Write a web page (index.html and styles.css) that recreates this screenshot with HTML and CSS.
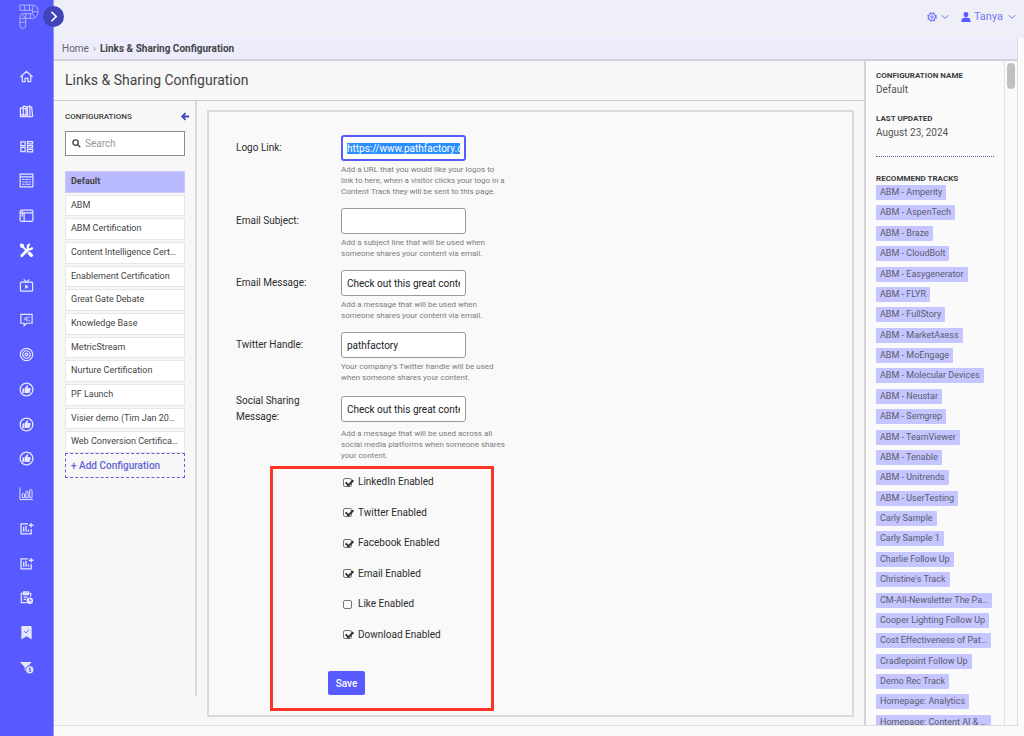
FILE: index.html
```html
<!DOCTYPE html>
<html lang="en">
<head>
<meta charset="utf-8">
<title>Links &amp; Sharing Configuration</title>
<link rel="stylesheet" href="styles.css">
</head>
<body>
<svg class="sprite" aria-hidden="true">
  <symbol id="thumb" viewBox="0 0 16 16"><circle cx="8" cy="8" r="6.800" fill="none" stroke="currentColor" stroke-width="1.400"/><path fill="currentColor" stroke="none" d="M3.600 6.800h1.800v4.800H3.600zM5.900 6.900 8.600 3.500c1-.3 1.300.5 1 1.400l-.5 1.600h2.400c.9 0 1.100.8.900 1.400l-.9 2.900c-.2.700-.6.900-1.200.9H5.900z"/></symbol>
  <symbol id="chartplus" viewBox="0 0 16 16"><path fill="none" stroke="currentColor" stroke-width="1.4" d="M9.500 3H2.200v10.800H13V8.500M5 6v5.500M7.500 5v6.500M10 9v2.500M13 2v5M10.500 4.500h5"/></symbol>
</svg>
<div class="shell">
  <nav class="sidebar" aria-label="Main">
    <a class="logo" href="#" aria-label="Home page">
      <svg viewBox="0 0 22 26"><path d="M1 1h13c4 0 6 3 6 7s-3 7-6 7H7v7.500a3 3 0 0 1-6 0V14c0-3 2-4 4-4h8c2 0 2-3.500 0-3.500H1zM6 1v5.500M11 1v5.500M15 1.200 14 7M20 8h-6M17 14l-3-4M12 10v5M7 10v5M1 15h6M1 19h6M3 10.500l4 4.500"/></svg>
    </a>
    <button class="expand" aria-label="Expand menu"><svg viewBox="0 0 20 20"><path d="m8 5.500 4.500 4.500L8 14.500"/></svg></button>
    <div class="nav-items">
      <a href="#" aria-label="Home"><svg viewBox="0 0 16 16"><path d="M1.500 8.500 8 2.500l6.500 6M3.500 7.500v6h3v-3.500h3v3.500h3v-6"/></svg></a>
      <a href="#" aria-label="Library"><svg viewBox="0 0 16 16"><path d="M1.500 4.500h3v9h-3zM4.500 2.500h3v11h-3zM9 3l2.500-.7v11.200H9zM12 3.500l1.500-.3 1 10-2.500.3M1.500 11.500h6M5 5h2"/></svg></a>
      <a href="#" aria-label="Tracks"><svg viewBox="0 0 16 16"><path d="M2 3h4.500v4H2zM2 9h4.500v4.500H2zM9 2.800h5.500v2.500H9zM9 7h5.500v2.500H9zM9 11.200h5.500v2.500H9z"/></svg></a>
      <a href="#" aria-label="Forms"><svg viewBox="0 0 16 16"><path d="M1.200 1.200h13.600v13.600H1.200zM1.200 4.200h13.600"/><path stroke-width="1.100" d="M3.500 7H6M7 7h3M11 7h1.500M3.500 9.500H5M6 9.500h3.500M10.500 9.500h2M3.500 12H6M7 12h5.500"/></svg></a>
      <a href="#" aria-label="Pages"><svg viewBox="0 0 16 16"><rect x="1.200" y="2.200" width="13.600" height="12" rx="1.500"/><path d="M1.200 5.200h13.600M5.500 5.200V14M3.500 2.500V9"/></svg></a>
      <a href="#" aria-label="Configuration" aria-current="page"><svg viewBox="0 0 16 16"><path stroke-width="3" stroke-linecap="round" d="m3 13.500 7-7"/><path stroke-width="2.400" d="M14.500 4.800a3.300 3.300 0 0 1-4.200 1.600M9.600 5.300c-.8-1.600.2-3.400 2-3.900"/><path stroke-width="2" d="m2.500 2.500 5 5"/><path stroke-width="3.600" stroke-linecap="round" d="m11 11 2.200 2.200"/><path fill="currentColor" d="m1.500 2 1-1 2 1v1.500L3.500 4.500 2 4z"/></svg></a>
      <a href="#" aria-label="Video"><svg viewBox="0 0 16 16"><rect x="1.500" y="4.500" width="13" height="9.500" rx="1"/><path d="m5 1.500 3 3 3-3"/><path fill="currentColor" d="m6.500 7 4 2.300-4 2.300z" stroke="none"/></svg></a>
      <a href="#" aria-label="Messages"><svg viewBox="0 0 16 16"><path d="M2 2.500h12v9.500H8L5.500 14.500V12H2z"/><path stroke-width="1" d="m8.500 5.300-3 2 3 2zM10.800 4.500v1.800M10.800 8.500v1.800"/></svg></a>
      <a href="#" aria-label="Targets"><svg viewBox="0 0 16 16"><circle cx="8" cy="8" r="6.600"/><circle cx="8" cy="8" r="4"/><circle cx="8" cy="8" r="1.500"/></svg></a>
      <a href="#" aria-label="Engagement"><svg><use href="#thumb"/></svg></a>
      <a href="#" aria-label="Recommendations"><svg><use href="#thumb"/></svg></a>
      <a href="#" aria-label="Likes"><svg><use href="#thumb"/></svg></a>
      <a href="#" aria-label="Analytics"><svg viewBox="0 0 16 16"><path stroke-width="1" d="M1 1.500v13h14M3.500 12.500V8.500q1.200-1.500 2.400 0v4zM7.300 12.500V6q1.200-1.500 2.400 0v6.500zM11.300 12.500V4.500q1.300-1.500 2.600 0v8z"/></svg></a>
      <a href="#" aria-label="Reports"><svg><use href="#chartplus"/></svg></a>
      <a href="#" aria-label="Insights"><svg><use href="#chartplus"/></svg></a>
      <a href="#" aria-label="Tasks"><svg viewBox="0 0 16 16"><path d="M12.500 7V3.500H2.500v10H8M5 2h5v3H5zM5 7.500h4M5 10h2.500"/><circle cx="11.500" cy="11.500" r="3.500" fill="currentColor" stroke="none"/><path class="cut" d="M11.500 9.500v2h2"/></svg></a>
      <a href="#" aria-label="Saved"><svg viewBox="0 0 16 16"><path fill="currentColor" stroke="none" d="M2.500 2.200Q2.500 1 3.700 1h8.600q1.200 0 1.200 1.200V15.500L8 12 2.500 15.500z"/><path class="cut" d="m5.500 6.500 2 2 3-3.500"/></svg></a>
      <a href="#" aria-label="Filters"><svg viewBox="0 0 16 16"><path fill="currentColor" stroke="none" d="M1 2h12.500L9 7.500V13L6 11V7.500z"/><circle cx="11.500" cy="10.500" r="4.300" fill="currentColor" class="ring"/><path class="cut" d="M12.700 8.700h-1.800v1.800h1.500v1.800h-1.900"/></svg></a>
    </div>
  </nav>

  <div class="page">
    <header class="topbar">
      <button aria-label="Settings">
        <svg class="gear" viewBox="0 0 12 12"><circle cx="6" cy="6" r="4.200"/><circle class="teeth" cx="6" cy="6" r="5"/><circle cx="6" cy="6" r="1.500"/></svg>
        <svg class="chev" viewBox="0 0 8 8"><path d="m.8 2.200 3.200 3.200 3.200-3.200"/></svg>
      </button>
      <button>
        <svg class="user" viewBox="0 0 10 10"><path d="M5 0c3.600 0 2.700 5.200 0 5.400C2.300 5.200 1.400 0 5 0zM.5 10C.3 7 1 6.300 3 5.700h4c2 .6 2.700 1.300 2.500 4.300z"/></svg>
        <span>Tanya</span>
        <svg class="chev" viewBox="0 0 8 8"><path d="m.8 2.200 3.200 3.200 3.200-3.200"/></svg>
      </button>
    </header>

    <div class="workspace">
      <div class="crumbs"><a href="#">Home</a><span class="sep">›</span><strong>Links &amp; Sharing Configuration</strong></div>
      <div class="columns">
        <main class="main">
          <h1>Links &amp; Sharing Configuration</h1>
          <div class="body">
            <section class="configs">
              <div class="configs-head">
                <h2>CONFIGURATIONS</h2>
                <button aria-label="Collapse"><svg viewBox="0 0 10 10"><path d="M9 5H1.500M5 1.200 1.300 5 5 8.800"/></svg></button>
              </div>
              <label class="search">
                <svg viewBox="0 0 10 10"><circle cx="4" cy="4" r="3"/><path d="m6.200 6.200 3 3"/></svg>
                <input type="text" placeholder="Search" aria-label="Search">
              </label>
              <div class="list">
                <a href="#" class="active">Default</a>
                <a href="#">ABM</a>
                <a href="#">ABM Certification</a>
                <a href="#">Content Intelligence Cert…</a>
                <a href="#">Enablement Certification</a>
                <a href="#">Great Gate Debate</a>
                <a href="#">Knowledge Base</a>
                <a href="#">MetricStream</a>
                <a href="#">Nurture Certification</a>
                <a href="#">PF Launch</a>
                <a href="#">Visier demo (Tim Jan 20…</a>
                <a href="#">Web Conversion Certifica…</a>
              </div>
              <button class="add">+ Add Configuration</button>
            </section>

            <form class="form">
              <div class="row">
                <label for="logo">Logo Link:</label>
                <div class="control"><input id="logo" type="text" value="https://www.pathfactory.com">
                <p>Add a URL that you would like your logos to link to here, when a visitor clicks your logo in a Content Track they will be sent to this page.</p></div>
              </div>
              <div class="row">
                <label for="subject">Email Subject:</label>
                <div class="control"><input id="subject" type="text">
                <p>Add a subject line that will be used when someone shares your content via email.</p></div>
              </div>
              <div class="row">
                <label for="message">Email Message:</label>
                <div class="control"><input id="message" type="text" value="Check out this great content">
                <p>Add a message that will be used when someone shares your content via email.</p></div>
              </div>
              <div class="row">
                <label for="twitter">Twitter Handle:</label>
                <div class="control"><input id="twitter" type="text" value="pathfactory">
                <p>Your company's Twitter handle will be used when someone shares your content.</p></div>
              </div>
              <div class="row tall">
                <label for="social">Social Sharing Message:</label>
                <div class="control"><input id="social" type="text" value="Check out this great content">
                <p>Add a message that will be used across all social media platforms when someone shares your content.</p></div>
              </div>
              <div class="highlight">
                <div class="checks">
                  <label><input type="checkbox" checked>LinkedIn Enabled</label>
                  <label><input type="checkbox" checked>Twitter Enabled</label>
                  <label><input type="checkbox" checked>Facebook Enabled</label>
                  <label><input type="checkbox" checked>Email Enabled</label>
                  <label><input type="checkbox">Like Enabled</label>
                  <label><input type="checkbox" checked>Download Enabled</label>
                </div>
                <button type="button" class="save">Save</button>
              </div>
            </form>
          </div>
        </main>

        <aside class="details">
          <h2>CONFIGURATION NAME</h2>
          <p>Default</p>
          <h2>LAST UPDATED</h2>
          <p>August 23, 2024</p>
          <hr>
          <h2>RECOMMEND TRACKS</h2>
          <div class="tags">
            <a href="#">ABM - Amperity</a>
            <a href="#">ABM - AspenTech</a>
            <a href="#">ABM - Braze</a>
            <a href="#">ABM - CloudBolt</a>
            <a href="#">ABM - Easygenerator</a>
            <a href="#">ABM - FLYR</a>
            <a href="#">ABM - FullStory</a>
            <a href="#">ABM - MarketAxess</a>
            <a href="#">ABM - MoEngage</a>
            <a href="#">ABM - Molecular Devices</a>
            <a href="#">ABM - Neustar</a>
            <a href="#">ABM - Semgrep</a>
            <a href="#">ABM - TeamViewer</a>
            <a href="#">ABM - Tenable</a>
            <a href="#">ABM - Unitrends</a>
            <a href="#">ABM - UserTesting</a>
            <a href="#">Carly Sample</a>
            <a href="#">Carly Sample 1</a>
            <a href="#">Charlie Follow Up</a>
            <a href="#">Christine's Track</a>
            <a href="#">CM-All-Newsletter The Pa…</a>
            <a href="#">Cooper Lighting Follow Up</a>
            <a href="#">Cost Effectiveness of Pat…</a>
            <a href="#">Cradlepoint Follow Up</a>
            <a href="#">Demo Rec Track</a>
            <a href="#">Homepage: Analytics</a>
            <a href="#">Homepage: Content AI &amp; …</a>
          </div>
        </aside>
        <div class="scroll"><div class="thumb"></div></div>
      </div>
    </div>
  </div>
</div>
<script src="script.js"></script>
</body>
</html>
```
FILE: styles.css
```css
* { box-sizing: border-box; }
body { margin: 0; font-family: Roboto, "Liberation Sans", sans-serif; font-size: 10px; color: #444; background: #fafafa; }
h1, h2, p { margin: 0; }
a { color: inherit; text-decoration: none; }
button { font: inherit; border: 0; padding: 0; background: none; color: inherit; }
input { font: inherit; color: inherit; }
svg { display: block; fill: none; stroke: currentColor; }
.sprite { position: absolute; width: 0; height: 0; }

.shell { display: grid; grid-template: minmax(0, 1fr) / 54px minmax(0, 1fr); height: 100vh; overflow: hidden; }

.sidebar { position: relative; background: #575aff; border-right: 1px solid #8f91ff; color: #e6e6ff; padding: 4px 0 0 19px; }
.logo { display: block; color: #b4b5ff; }
.logo svg { width: 21px; height: 25px; stroke-width: 1; }
.expand { position: absolute; left: 43px; top: 6px; z-index: 2; width: 21px; height: 21px; border-radius: 50%; background: #4143b8; color: #fff; }
.expand svg { width: 21px; height: 21px; stroke-width: 1.6; }
.nav-items { display: flex; flex-direction: column; justify-content: space-between; height: 606px; margin-top: 40px; }
.nav-items svg { width: 15px; height: 15px; stroke-width: 1.3; }
.nav-items a[aria-current] { color: #fff; }
.nav-items .cut { stroke: #575aff; stroke-width: 1; }
.nav-items .ring { stroke: #575aff; stroke-width: 1; }

.page { display: flex; flex-direction: column; min-width: 0; padding: 0 0 10px; }
.topbar { flex: none; display: flex; justify-content: flex-end; align-items: center; gap: 15px; height: 38px; padding: 0 8px 4px; background: #efeff8; color: #7476f4; }
.topbar button { display: flex; align-items: center; gap: 4px; }
.topbar span { font-size: 11px; line-height: 14px; }
.gear { width: 10px; height: 10px; stroke: #575aff; }
.gear .teeth { stroke-dasharray: 2 2; stroke-width: 1.5; }
.chev { width: 8px; height: 8px; }
.user { width: 10px; height: 10px; fill: #575aff; stroke: none; margin-right: -2px; }
.topbar button:last-child { gap: 5px; margin-left: -3px; }

.workspace { flex: 1; min-height: 0; display: flex; flex-direction: column; margin-right: 6px; border: solid #ddd; border-width: 0 1px 1px 0; }
.crumbs { flex: none; display: flex; gap: 4px; height: 23px; padding: 4px 8px; line-height: 14px; background: #edecfc; border-bottom: 2px solid #d0d0d6; }
.crumbs a { color: #666; }
.crumbs .sep { color: #999; }
.crumbs strong { font-weight: 700; }
.columns { flex: 1; min-height: 0; display: grid; grid-template: minmax(0, 1fr) / minmax(0, 1fr) 138px 13px; }
.main { display: flex; flex-direction: column; min-width: 0; background: #f7f7f7; border-right: 2px solid #d4d4d4; }
h1 { flex: none; padding: 9px 11px 10px; font-size: 14px; font-weight: 400; line-height: 20px; border-bottom: 1px solid #ccc; }
.body { flex: 1; display: flex; min-height: 0; }

.configs { flex: none; width: 143px; margin-bottom: 29px; padding: 9px 10px 0 11px; border-right: 2px solid #d8d8d8; }
.configs-head { display: flex; justify-content: space-between; margin-right: -5px; color: #4143b8; }
h2 { font-size: 8px; line-height: 12px; font-weight: 700; color: #3c3c3c; }
.configs-head h2 { font-weight: 500; line-height: 13px; }
.configs-head svg { width: 9px; height: 9px; stroke-width: 2; }
.search { display: flex; align-items: center; gap: 4px; height: 25px; margin-top: 8px; padding: 0 6px; background: #fff; border: 1px solid #8c8c8c; }
.search svg { flex: none; width: 9px; height: 9px; stroke-width: 1.5; }
.search input { min-width: 0; width: 100%; border: 0; padding: 0; outline: 0; background: none; }
.search input::placeholder { color: #999; }
.list { display: grid; grid-auto-rows: 1fr; gap: 2px; height: 282px; margin-top: 15px; }
.list a { padding: 0 5px; font-size: 9px; line-height: 19px; background: #fff; border: 1px solid #e6e6e6; white-space: nowrap; }
.list .active { background: #b9baff; border-color: #c9caf5; font-weight: 700; }
.add { display: block; width: 100%; height: 25px; padding: 0 5px; text-align: left; font-weight: 500; color: #6264d2; border: 1px dashed #6264d2; }

.form { flex: 1; min-width: 0; margin: 9px 10px 8px; padding: 23px 27px 0; background: #f9f9f9; border: 2px solid #dadada; }
.row { display: flex; margin-top: 11px; }
.row:first-child { margin-top: 0; }
.row > label { flex: none; width: 105px; padding: 5px 30px 0 0; line-height: 16px; color: #2c2c2c; }
.control { width: 167px; }
.control input { display: block; width: 125px; height: 26px; padding: 0 5px; background: #fff; border: 1px solid #999; border-radius: 3px; outline: 0; color: #222; }
.control input:focus { border: 2px solid #575aff; padding: 0 4px; }
.control input::selection { background: #2b8ffb; color: #fff; }
.control p { margin-top: 3px; font-size: 8px; line-height: 11px; color: #7c7c7c; }
.row.tall { margin-top: 9px; }
.tall > label { padding-top: 1px; }
.tall .control { padding-top: 4px; }
.tall p { margin-top: 6px; }
.highlight { width: 224px; margin: 5px 0 0 34px; padding: 5px 0 13px 55px; border: 3px solid #fb3426; }
.checks { display: flex; flex-direction: column; justify-content: space-between; height: 169px; padding-left: 15px; }
.checks label { display: flex; align-items: center; gap: 6px; line-height: 16px; color: #2c2c2c; }
.checks input { appearance: none; position: relative; width: 9px; height: 9px; margin: 0; border: 1px solid #777; border-radius: 2px; }
.checks input:checked::after { content: ""; position: absolute; left: 3px; top: -1px; width: 3px; height: 6px; border: solid #333; border-width: 0 2px 2px 0; transform: rotate(45deg); }
.save { display: block; width: 37px; height: 24px; margin-top: 28px; border-radius: 2px; background: #575aff; color: #fff; font-weight: 500; }

.details { min-width: 0; overflow: hidden; padding: 9px 10px 0; }
.details p { margin: 1px 0 16px; font-size: 10px; line-height: 14px; color: #555; }
.details hr { margin: 0 0 16px; border: 0; border-top: 1px dotted #4c5a85; }
.tags { display: flex; flex-direction: column; align-items: flex-start; justify-content: space-between; height: 545px; }
.tags a { max-width: 100%; height: 15px; padding: 0 4px; font-size: 9px; line-height: 15px; color: #5c5c6c; background: #c5c5ff; border-radius: 1px; white-space: nowrap; }
.scroll { padding: 2px; border-left: 1px solid #e4e4e4; }
.thumb { width: 8px; height: 26px; border-radius: 4px; background: #c1c1c1; }
```
FILE: script.js
```js
const logo = document.getElementById('logo');
logo.focus();
logo.select();
logo.scrollLeft = 0;
```
